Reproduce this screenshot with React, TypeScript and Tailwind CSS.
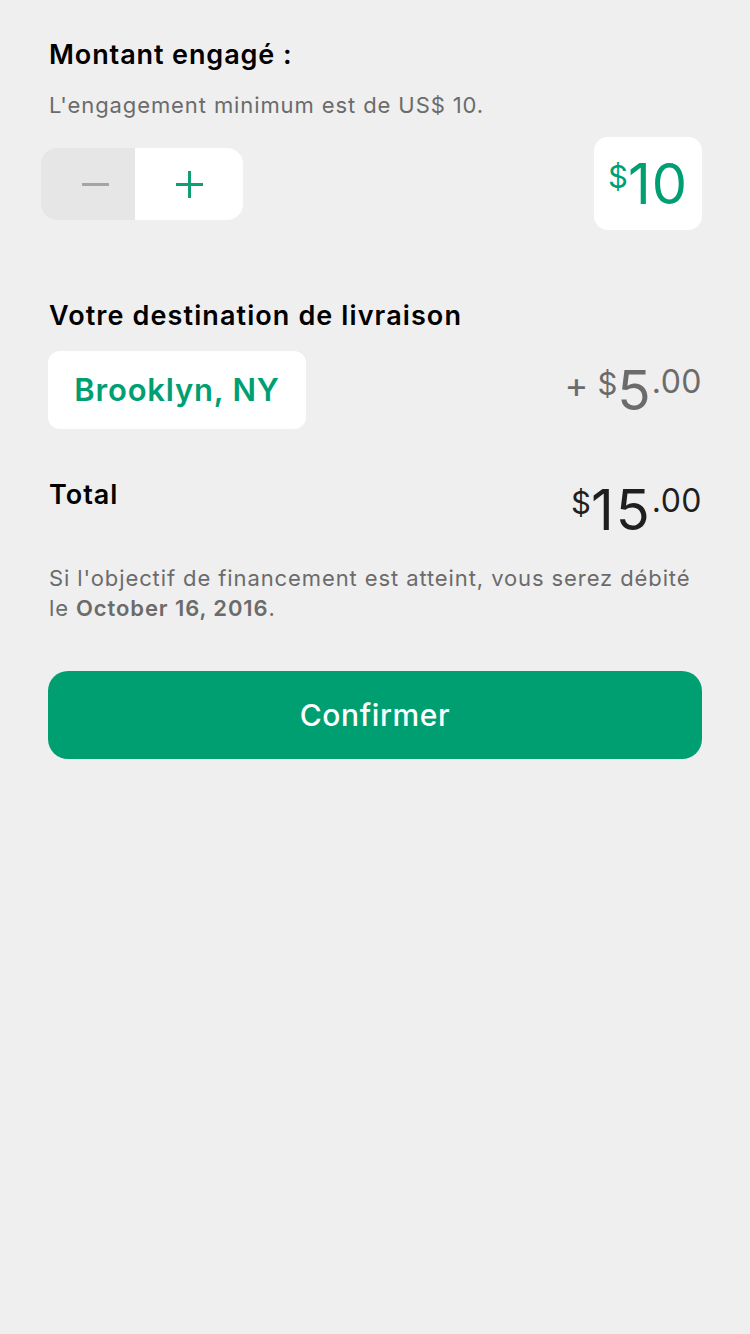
import React from "react";

export default function App() {
  return (
    <div
      className="min-h-[1334px] w-[750px] bg-[#efefef] px-[48px] pt-[38px] text-black"
      style={{ fontFamily: "Inter, 'Noto Sans', sans-serif" }}
    >
      <h1 className="pl-px text-[27px] font-semibold leading-[34px] tracking-[0.9px]">Montant engagé :</h1>
      <p className="mt-[19px] pl-px text-[22px] leading-[28px] tracking-[0.9px] text-[#6b6b6b]">
        L'engagement minimum est de US$ 10.
      </p>

      <div className="mt-[18px] flex items-start justify-between">
        <div className="-ml-[7px] mt-[11px] flex h-[72px] w-[202px] overflow-hidden rounded-[16px]">
          <button className="flex w-[94px] items-center justify-center bg-[#e6e6e6] pl-[14px]">
            <svg width="27" height="27" viewBox="0 0 27 27">
              <rect x="0" y="12" width="27" height="3" fill="#a2a6a5" />
            </svg>
          </button>
          <button className="flex flex-1 items-center justify-center bg-white">
            <svg width="27" height="27" viewBox="0 0 27 27">
              <rect x="0" y="12" width="27" height="3" fill="#0f9f75" />
              <rect x="12" y="0" width="3" height="27" fill="#0f9f75" />
            </svg>
          </button>
        </div>
        <div className="flex h-[93px] w-[108px] items-center justify-center rounded-[14px] bg-white text-[#009f72]">
          <div className="flex items-start">
            <span className="mt-[5px] text-[31px] leading-none">$</span>
            <span className="text-[56px] leading-none tracking-[1px]">10</span>
          </div>
        </div>
      </div>

      <h2 className="mt-[69px] pl-px text-[27px] font-semibold leading-[34px] tracking-[1.1px]">
        Votre destination de livraison
      </h2>

      <div className="mt-[18px] flex items-start justify-between">
        <div className="flex h-[78px] w-[258px] items-center justify-center rounded-[12px] bg-white">
          <span className="text-[31px] font-semibold tracking-[0.8px] text-[#009f72]">Brooklyn, NY</span>
        </div>
        <div className="mt-[12px] flex items-start text-[#6b6b6b]">
          <span className="mr-[9px] mt-[4px] text-[36px] leading-none">+</span>
          <span className="mt-[5px] text-[31px] leading-none">$</span>
          <span className="text-[55px] leading-none tracking-[1px]">5</span>
          <span className="mt-[3px] text-[32px] leading-none tracking-[0.5px]">.00</span>
        </div>
      </div>

      <div className="mt-[49px] flex items-start justify-between">
        <span className="pl-px text-[27px] font-semibold leading-[34px] tracking-[1px]">Total</span>
        <div className="mt-[4px] flex items-start text-[#1f1f1f]">
          <span className="mt-[5px] text-[31px] leading-none">$</span>
          <span className="text-[56px] leading-none tracking-[2px]">15</span>
          <span className="mt-[3px] text-[32px] leading-none tracking-[0.5px]">.00</span>
        </div>
      </div>

      <p className="mt-[25px] pl-px text-[22px] leading-[30px] tracking-[0.9px] text-[#6b6b6b]">
        Si l'objectif de financement est atteint, vous serez débité le{" "}
        <span className="font-semibold">October 16, 2016</span>.
      </p>

      <button className="mt-[48px] flex h-[88px] w-full items-center justify-center rounded-[20px] bg-[#009f72] text-[30px] font-medium tracking-[0.6px] text-white">
        Confirmer
      </button>
    </div>
  );
}
